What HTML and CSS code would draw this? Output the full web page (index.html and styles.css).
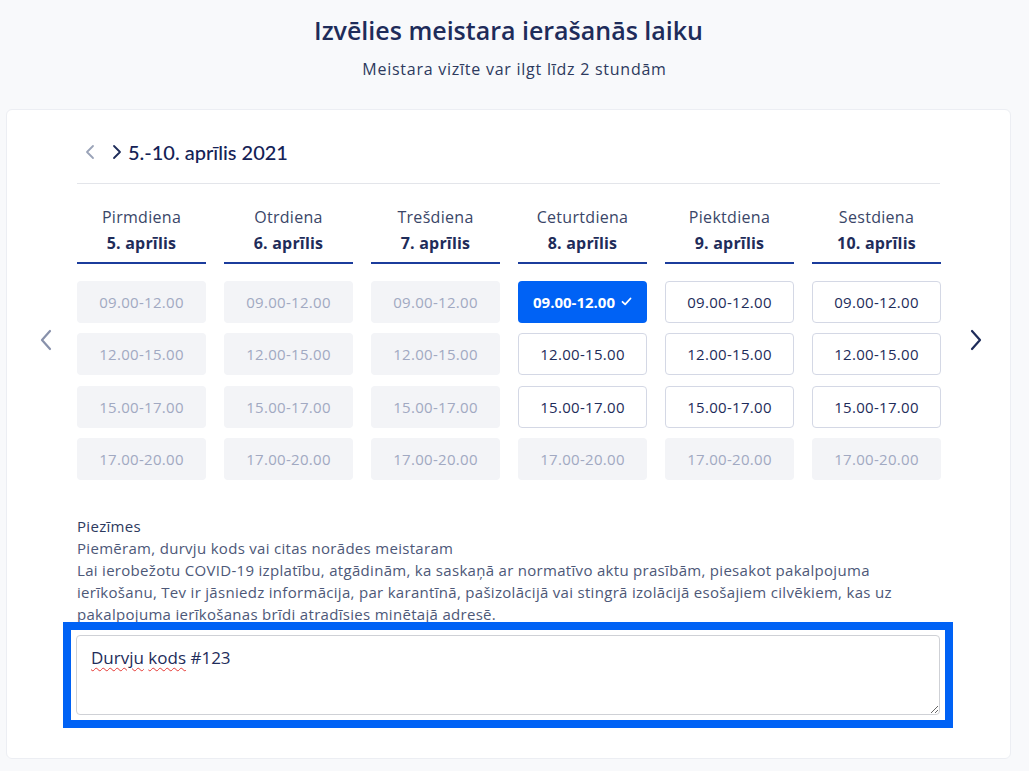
FILE: index.html
```html
<!DOCTYPE html>
<html lang="lv">
<head>
<meta charset="utf-8">
<title>Izvēlies meistara ierašanās laiku</title>
<link rel="stylesheet" href="styles.css">
</head>
<body>
<header class="head">
  <h1 class="title">Izvēlies meistara ierašanās laiku</h1>
  <p class="subtitle">Meistara vizīte var ilgt līdz 2 stundām</p>
</header>
<main class="card">
  <div class="week">
    <span class="chev chev-muted"><svg width="12" height="16" viewBox="0 0 12 16"><path d="M9 2 L3 8 L9 14" fill="none" stroke="currentColor" stroke-width="1.8" stroke-linecap="round" stroke-linejoin="round"/></svg></span>
    <span class="chev"><svg width="12" height="16" viewBox="0 0 12 16"><path d="M3 2 L9 8 L3 14" fill="none" stroke="currentColor" stroke-width="1.8" stroke-linecap="round" stroke-linejoin="round"/></svg></span>
    <span class="week-label">5.-10. aprīlis 2021</span>
  </div>
  <div class="divider"></div>
  <section class="slots">
    <div class="side side-left"><svg width="14" height="22" viewBox="0 0 14 22"><path d="M11 2 L3 11 L11 20" fill="none" stroke="currentColor" stroke-width="2.2" stroke-linecap="round" stroke-linejoin="round"/></svg></div>
    <div class="grid">
      <div class="day"><div class="dname">Pirmdiena</div><div class="ddate">5. aprīlis</div></div>
      <div class="day"><div class="dname">Otrdiena</div><div class="ddate">6. aprīlis</div></div>
      <div class="day"><div class="dname">Trešdiena</div><div class="ddate">7. aprīlis</div></div>
      <div class="day"><div class="dname">Ceturtdiena</div><div class="ddate">8. aprīlis</div></div>
      <div class="day"><div class="dname">Piektdiena</div><div class="ddate">9. aprīlis</div></div>
      <div class="day"><div class="dname">Sestdiena</div><div class="ddate">10. aprīlis</div></div>

      <div class="slot off">09.00-12.00</div>
      <div class="slot off">09.00-12.00</div>
      <div class="slot off">09.00-12.00</div>
      <div class="slot sel">09.00-12.00 <svg class="check" width="11" height="9" viewBox="0 0 11 9"><path d="M1.5 4.8 L4.2 7.3 L9.5 1.5" fill="none" stroke="#fff" stroke-width="1.8" stroke-linecap="round" stroke-linejoin="round"/></svg></div>
      <div class="slot on">09.00-12.00</div>
      <div class="slot on">09.00-12.00</div>

      <div class="slot off">12.00-15.00</div>
      <div class="slot off">12.00-15.00</div>
      <div class="slot off">12.00-15.00</div>
      <div class="slot on">12.00-15.00</div>
      <div class="slot on">12.00-15.00</div>
      <div class="slot on">12.00-15.00</div>

      <div class="slot off">15.00-17.00</div>
      <div class="slot off">15.00-17.00</div>
      <div class="slot off">15.00-17.00</div>
      <div class="slot on">15.00-17.00</div>
      <div class="slot on">15.00-17.00</div>
      <div class="slot on">15.00-17.00</div>

      <div class="slot off">17.00-20.00</div>
      <div class="slot off">17.00-20.00</div>
      <div class="slot off">17.00-20.00</div>
      <div class="slot off">17.00-20.00</div>
      <div class="slot off">17.00-20.00</div>
      <div class="slot off">17.00-20.00</div>
    </div>
    <div class="side side-right"><svg width="14" height="22" viewBox="0 0 14 22"><path d="M3 2 L11 11 L3 20" fill="none" stroke="currentColor" stroke-width="2.2" stroke-linecap="round" stroke-linejoin="round"/></svg></div>
  </section>
  <section class="notes">
    <div class="notes-label">Piezīmes</div>
    <p class="notes-text">Piemēram, durvju kods vai citas norādes meistaram<br>Lai ierobežotu COVID-19 izplatību, atgādinām, ka saskaņā ar normatīvo aktu prasībām, piesakot pakalpojuma ierīkošanu, Tev ir jāsniedz informācija, par karantīnā, pašizolācijā vai stingrā izolācijā esošajiem cilvēkiem, kas uz pakalpojuma ierīkošanas brīdi atradīsies minētajā adresē.</p>
    <div class="focus-ring">
      <div class="ta"><span class="sp">Durvju</span> <span class="sp">kods</span> #123</div>
    </div>
  </section>
</main>
</body>
</html>
```

FILE: styles.css
```css
* { box-sizing: border-box; }
html, body { margin: 0; padding: 0; }
body {
  background: #f8f9fb;
  font-family: "Open Sans", Lato, sans-serif;
  color: #1e2c5a;
}
.head { text-align: center; padding-top: 14px; }
.title {
  margin: 0;
  padding-right: 12px;
  font-size: 25px;
  line-height: 32px;
  font-weight: 600;
  color: #1e2c5a;
}
.subtitle {
  margin: 13px 0 0;
  font-size: 16px;
  line-height: 20px;
  letter-spacing: 0.75px;
  color: #2d3a5e;
}
.card {
  margin: 30px 18px 0 6px;
  width: 1005px;
  background: #fff;
  border: 1px solid #eceef3;
  border-radius: 6px;
  padding: 28px 70px 30px;
}
.week {
  display: flex;
  align-items: center;
  height: 28px;
  padding-left: 7px;
}
.chev { display: flex; color: #1e2c5a; margin-right: 9px; }
.chev-muted { color: #9aa3b8; margin-right: 15px; }
.week-label { font-family: Lato, sans-serif; font-size: 20px; font-weight: 500; color: #142256; margin-left: -4px; }
.divider { height: 1px; background: #e3e5ea; margin-top: 17px; }

.slots {
  display: grid;
  grid-template-columns: 71px 1fr 71px;
  margin: 0 -71px;
}
.side { display: flex; align-items: center; justify-content: center; padding-top: 16px; }
.side-left { color: #8891ab; padding-left: 8px; }
.side-right { color: #1e2c5a; padding-right: 2px; }
.grid {
  display: grid;
  grid-template-columns: repeat(6, 129px);
  column-gap: 18px;
  row-gap: 10.5px;
}
.day {
  text-align: center;
  padding-top: 22px;
  border-bottom: 2px solid #1b3c9c;
  height: 80px;
  margin-bottom: 6px;
}
.dname { font-size: 16px; line-height: 22px; letter-spacing: 0.3px; color: #3a4668; }
.ddate { font-size: 16px; line-height: 22px; font-weight: 700; letter-spacing: 0.2px; color: #1e2c5a; margin-top: 4px; }
.slot {
  height: 42px;
  border-radius: 4px;
  display: flex;
  align-items: center;
  justify-content: center;
  font-size: 15px;
  letter-spacing: 0.3px;
}
.off { background: #f3f4f7; color: #a1a9c2; }
.on { background: #fff; border: 1px solid #d4d8e5; color: #1e2c5a; }
.sel { background: #0062f5; color: #fff; font-weight: 700; letter-spacing: 0; }
.check { margin-left: 6px; }

.notes { margin-top: 35px; }
.notes-label { font-size: 15px; line-height: 22px; letter-spacing: 0.3px; color: #2d3a5e; }
.notes-text { margin: 0; font-size: 15px; line-height: 22px; letter-spacing: 0.3px; color: #4d5878; }
.focus-ring {
  position: relative;
  margin: -3px -13px 0 -14px;
  border: 8px solid #0062f5;
  padding: 5px;
  background: #fff;
}
.ta {
  height: 80px;
  border: 1px solid #cfd1d6;
  border-radius: 4px;
  padding: 10px 14px;
  font-size: 17px;
  line-height: 24px;
  color: #1e2c5a;
  resize: vertical;
  overflow: auto;
}
.sp { text-decoration: underline wavy #e53935; text-decoration-thickness: 1px; text-underline-offset: 3px; }
```
